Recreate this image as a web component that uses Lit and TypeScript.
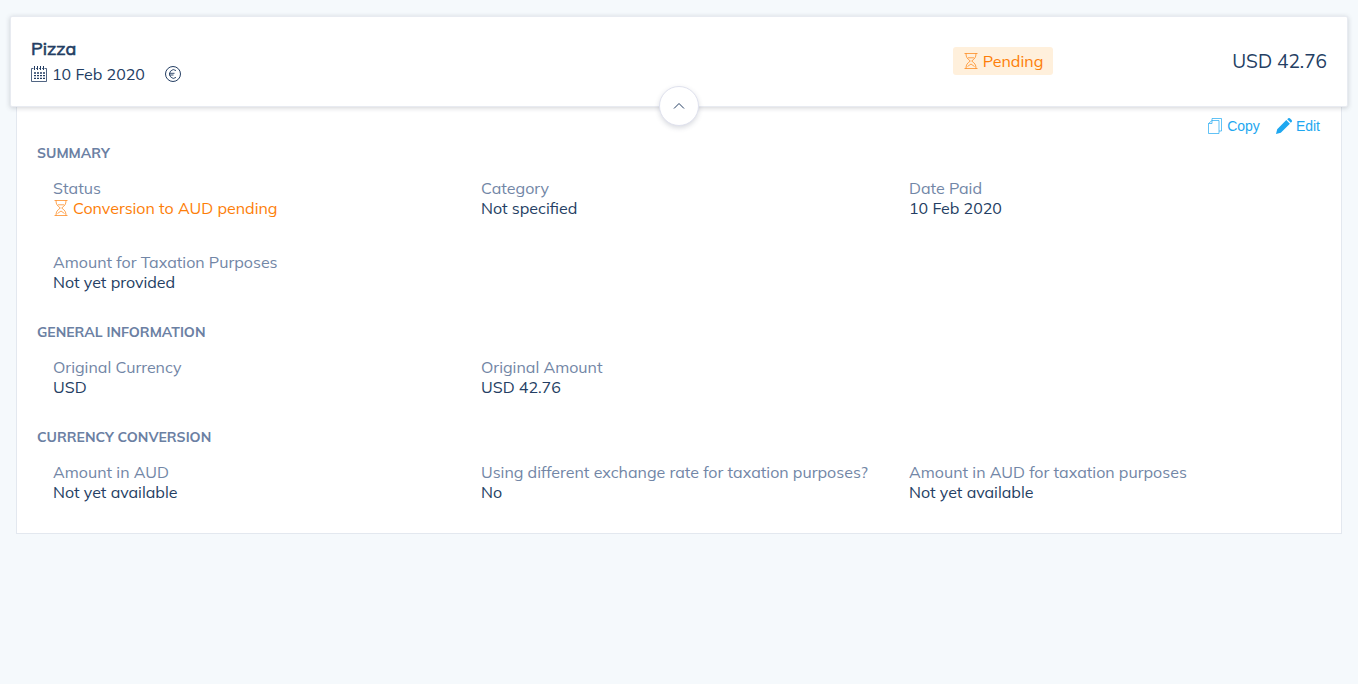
import { LitElement, html, css, svg } from "lit";
import { customElement, state } from "lit/decorators.js";

interface Field {
  label: string;
  value: string;
  pending?: boolean;
}

interface Section {
  title: string;
  fields: Field[];
}

const sections: Section[] = [
  {
    title: "Summary",
    fields: [
      { label: "Status", value: "Conversion to AUD pending", pending: true },
      { label: "Category", value: "Not specified" },
      { label: "Date Paid", value: "10 Feb 2020" },
      { label: "Amount for Taxation Purposes", value: "Not yet provided" },
    ],
  },
  {
    title: "General Information",
    fields: [
      { label: "Original Currency", value: "USD" },
      { label: "Original Amount", value: "USD 42.76" },
    ],
  },
  {
    title: "Currency Conversion",
    fields: [
      { label: "Amount in AUD", value: "Not yet available" },
      { label: "Using different exchange rate for taxation purposes?", value: "No" },
      { label: "Amount in AUD for taxation purposes", value: "Not yet available" },
    ],
  },
];

const icon = (body: unknown) =>
  html`<svg class="icon" viewBox="0 0 16 16" width="16" height="16" fill="none" stroke="currentColor" aria-hidden="true">${body}</svg>`;

const hourglass = () =>
  icon(svg`<g stroke-width="0.7"><path d="M1.500 .5h13M1.500 15.500h13"/><path d="M3 .5c0 4 1.400 5.300 4.300 7.500C4.400 10.200 3 11.500 3 15.500M13 .5c0 4-1.400 5.300-4.300 7.500 2.900 2.200 4.300 3.500 4.300 7.500"/><path d="M5 4.800h6M4.500 13.500 8 11l3.500 2.500"/></g>`);

const calendar = () =>
  icon(svg`<path stroke-width="0.8" d="M2.500 2.500h-2v13h15v-13h-2M5 2.500h1M8 2.500h1M11 2.500h1"/><path d="M3.500 0v4M6.500 0v4M9.500 0v4M12.500 0v4"/><path stroke-width="1.300" stroke-dasharray="2 1" d="M3 7h11M3 9.700h11M3 12.400h11"/>`);

const euro = () =>
  icon(svg`<circle cx="8" cy="8" r="7.500"/><path d="M11 4.600A4 4.300 0 1 0 11 11.400M4 7.300h5.500M4 9h4.500" stroke-width="0.900"/>`);

const copy = () =>
  icon(svg`<path stroke-width="0.700" d="M5 2.500V.5h9.500v12.500h-2.500M5 2.500h7v13H1.500V5.500ZM5 2.500v3H1.500"/>`);

const pencil = () =>
  icon(svg`<path fill="currentColor" stroke="none" d="M0 16l1.200-4.800L10.300 2.100l3.600 3.600-9.100 9.100ZM11.200 1.200 12 .4c.6-.6 1.500-.5 2.100 0l1.500 1.500c.5.600.6 1.500 0 2.100l-.8.800Z"/>`);

@customElement("app-root")
export class AppRoot extends LitElement {
  @state() private open = true;

  static styles = css`
    :host {
      display: block;
      box-sizing: border-box;
      min-height: 100vh;
      padding: 16px 10px;
      background: #f5f9fc;
      color: #243e63;
      font: 16px/20px Mulish, Muli, Lato, sans-serif;
    }
    * {
      box-sizing: border-box;
    }
    h1, h2, dl, dd {
      margin: 0;
    }
    .icon {
      flex: none;
    }
    .card {
      position: relative;
      display: grid;
      grid-template-columns: 8fr 2fr 2fr;
      align-items: center;
      padding: 21px 20px 22px;
      background: #fff;
      border: 1px solid #e8ebf1;
      border-radius: 2px;
      box-shadow: 0 1px 5px rgba(50, 55, 70, 0.22);
    }
    h1 {
      font-size: 18px;
      line-height: 22px;
      font-weight: 400;
      -webkit-text-stroke: 0.6px currentColor;
    }
    .meta {
      display: flex;
      align-items: center;
      gap: 20px;
      padding-top: 4px;
    }
    .with-icon {
      display: flex;
      align-items: center;
      gap: 5px;
    }
    .badge {
      justify-self: center;
      padding: 4px 10px;
      border-radius: 3px;
      background: #fff0dc;
    }
    .pending {
      gap: 4px;
      color: #fd7e08;
    }
    .amount {
      justify-self: end;
      font-size: 19px;
    }
    .toggle {
      position: absolute;
      left: 50%;
      bottom: 0;
      transform: translate(-50%, 50%);
      display: flex;
      align-items: center;
      justify-content: center;
      width: 40px;
      height: 40px;
      padding: 0;
      border: 1px solid #e0e2ee;
      border-radius: 50%;
      background: #fff;
      color: inherit;
      box-shadow: 0 2px 5px rgba(50, 60, 90, 0.18);
      cursor: pointer;
    }
    .toggle.closed .icon {
      transform: rotate(180deg);
    }
    .panel {
      margin: 0 6px;
      padding: 10px 20px 31px;
      background: #fff;
      border: 1px solid #e3e8ef;
      border-top: 0;
    }
    .actions {
      display: flex;
      justify-content: flex-end;
      gap: 16px;
      margin-bottom: 8px;
      padding-right: 1px;
    }
    .action {
      display: flex;
      align-items: center;
      gap: 4px;
      padding: 0;
      border: 0;
      background: none;
      color: #1ea7f0;
      font: 14px/18px "Liberation Sans", Arial, sans-serif;
      cursor: pointer;
    }
    section + section {
      margin-top: 30px;
    }
    h2 {
      margin-bottom: 15px;
      color: #6b80a3;
      font-size: 14px;
      line-height: 20px;
      font-weight: 700;
      text-transform: uppercase;
    }
    dl {
      display: grid;
      grid-template-columns: repeat(3, 1fr);
      row-gap: 34px;
    }
    .field {
      padding: 0 16px;
    }
    dt {
      color: #7286a6;
    }
  `;

  render() {
    return html`
      <header class="card">
        <div>
          <h1>Pizza</h1>
          <div class="meta">
            <span class="with-icon">${calendar()}10 Feb 2020</span>
            ${euro()}
          </div>
        </div>
        <span class="with-icon pending badge">${hourglass()}Pending</span>
        <span class="amount">USD 42.76</span>
        <button
          class="toggle ${this.open ? "" : "closed"}"
          aria-label="Toggle details"
          aria-expanded=${this.open}
          @click=${() => (this.open = !this.open)}
        >
          ${icon(svg`<path d="M3 10.500 8 5.500l5 5"/>`)}
        </button>
      </header>
      ${this.open ? this.renderDetails() : ""}
    `;
  }

  private renderDetails() {
    return html`
      <main class="panel">
        <div class="actions">
          <button class="action">${copy()}Copy</button>
          <button class="action">${pencil()}Edit</button>
        </div>
        ${sections.map(
          (section) => html`
            <section>
              <h2>${section.title}</h2>
              <dl>
                ${section.fields.map(
                  (field) => html`
                    <div class="field">
                      <dt>${field.label}</dt>
                      <dd class=${field.pending ? "with-icon pending" : ""}>
                        ${field.pending ? hourglass() : ""}${field.value}
                      </dd>
                    </div>
                  `
                )}
              </dl>
            </section>
          `
        )}
      </main>
    `;
  }
}
